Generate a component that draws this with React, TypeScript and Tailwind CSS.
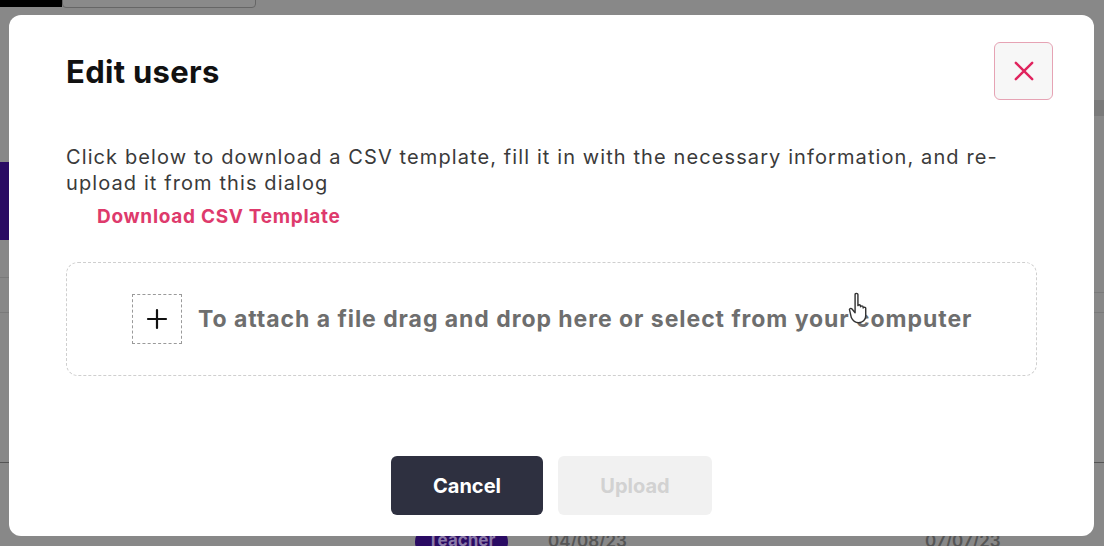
import React from "react";

function CloseIcon() {
  return (
    <svg width="28" height="28" viewBox="0 0 24 24" fill="none" stroke="#e0245e" strokeWidth="2.1" strokeLinecap="round">
      <path d="M5 5L19 19M19 5L5 19" />
    </svg>
  );
}

function PlusIcon() {
  return (
    <svg width="22" height="22" viewBox="0 0 22 22" fill="none" stroke="#111" strokeWidth="2.2" strokeLinecap="round">
      <path d="M11 2V20M2 11H20" />
    </svg>
  );
}

function HandCursor() {
  return (
    <svg width="26" height="36" viewBox="0 0 22 30" fill="white" stroke="#333" strokeWidth="1.2" strokeLinejoin="round">
      <path d="M6 3.5c0-1.2 2.4-1.2 2.4 0V13c0-1 2.2-1 2.2 0v1c0-1 2.2-1 2.2 0v1c0-1 2.2-1 2.2 0v6.5c0 3.6-2.6 6-6 6s-5.2-2.2-6.2-4.4L1.4 17c-.7-1.3 1-2.3 2-1.1L6 19V3.5z" />
    </svg>
  );
}

export default function App() {
  return (
    <div className="relative w-[1104px] h-[546px] overflow-hidden bg-[#888888]" style={{ fontFamily: "Inter, 'Open Sans', sans-serif" }}>
      {/* backdrop page remnants */}
      <div className="absolute left-0 top-0 w-[62px] h-[7px] bg-[#000]" />
      <div className="absolute left-[62px] top-[-4px] w-[194px] h-[12px] rounded-b-[4px] border border-[#666] bg-[#8a8a8a]" />
      <div className="absolute left-0 top-[162px] w-[9px] h-[78px] bg-[#2a0b63]" />
      <div className="absolute left-0 top-[277px] w-[9px] h-px bg-[#7a7a7a]" />
      <div className="absolute left-0 top-[312px] w-[9px] h-px bg-[#7a7a7a]" />
      <div className="absolute left-0 top-[462px] w-[9px] h-px bg-[#555]" />
      <div className="absolute right-0 top-[100px] w-[10px] h-[16px] bg-[#7a7a7a]" />
      <div className="absolute right-0 top-[292px] w-[10px] h-px bg-[#7a7a7a]" />
      <div className="absolute right-0 top-[312px] w-[10px] h-px bg-[#7a7a7a]" />
      <div className="absolute right-0 top-[462px] w-[10px] h-px bg-[#555]" />
      <div className="absolute left-[415px] top-[528px] w-[93px] h-[28px] rounded-full bg-[#2a0b63] flex items-start justify-center">
        <span className="text-[17px] font-bold text-[#8a7aa8] leading-none mt-[4px]">Teacher</span>
      </div>
      <div className="absolute left-[548px] top-[533px] text-[17px] font-semibold text-[#555] leading-none">04/08/23</div>
      <div className="absolute left-[925px] top-[533px] text-[17px] font-semibold text-[#555] leading-none">07/07/23</div>

      {/* modal overlay */}
      <div className="absolute inset-0 pl-[9px] pr-[10px] pt-[15px] pb-[10px] flex">
        <div className="relative flex-1 bg-white rounded-[12px] flex flex-col pl-[57px] pr-[41px] pt-[27px]">
          <div className="flex items-start justify-between">
            <h1 className="mt-[12px] text-[31px] font-bold text-[#111] tracking-[0.3px] leading-[36px]">Edit users</h1>
            <button className="w-[59px] h-[58px] rounded-[6px] border border-[#e6a3b4] bg-[#f7f7f7] flex items-center justify-center">
              <CloseIcon />
            </button>
          </div>
          <p className="mt-[44px] mr-[20px] text-[20px] leading-[26px] text-[#3a3a3a] tracking-[1.1px]">
            Click below to download a CSV template, fill it in with the necessary information, and re-upload it from this dialog
          </p>
          <a className="mt-[8px] ml-[31px] text-[19px] font-bold text-[#de3a6c] leading-[26px] tracking-[0.7px]">Download CSV Template</a>
          <div className="mt-[32px] mr-[16px] h-[114px] rounded-[12px] border border-dashed border-[#cfcfcf] flex items-center pl-[65px] gap-[16px]">
            <div className="w-[50px] h-[50px] border border-dashed border-[#9a9a9a] flex items-center justify-center">
              <PlusIcon />
            </div>
            <div className="relative text-[23px] font-bold text-[#6e6e6e] tracking-[0.95px]">
              To attach a file drag and drop here or select from your computer
              <div className="absolute left-[650px] top-[-12px]">
                <HandCursor />
              </div>
            </div>
          </div>
          <div className="mt-[80px] mr-[16px] flex justify-center gap-[15px]">
            <button className="w-[152px] h-[59px] rounded-[6px] bg-[#2e3040] text-white text-[20px] font-bold">Cancel</button>
            <button className="w-[154px] h-[59px] rounded-[6px] bg-[#f1f1f1] text-[#d2d2d2] text-[20px] font-bold">Upload</button>
          </div>
        </div>
      </div>
    </div>
  );
}
